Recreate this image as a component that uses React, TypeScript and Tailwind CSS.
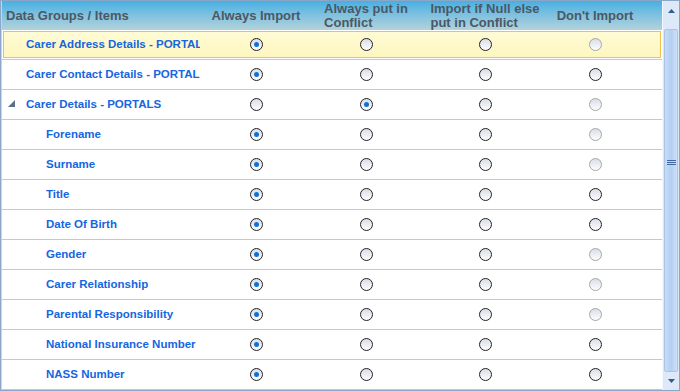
const rows = [
  { label: "Carer Address Details - PORTAL", level: 0, checked: 0, dim: true, highlight: true },
  { label: "Carer Contact Details - PORTAL", level: 0, checked: 0, dim: false },
  { label: "Carer Details - PORTALS", level: 0, checked: 1, dim: true, expander: true },
  { label: "Forename", level: 1, checked: 0, dim: true },
  { label: "Surname", level: 1, checked: 0, dim: true },
  { label: "Title", level: 1, checked: 0, dim: false },
  { label: "Date Of Birth", level: 1, checked: 0, dim: false },
  { label: "Gender", level: 1, checked: 0, dim: true },
  { label: "Carer Relationship", level: 1, checked: 0, dim: true },
  { label: "Parental Responsibility", level: 1, checked: 0, dim: true },
  { label: "National Insurance Number", level: 1, checked: 0, dim: false },
  { label: "NASS Number", level: 1, checked: 0, dim: false },
];

const grid = "grid grid-cols-[198px_112px_108px_130px_90px_1fr] items-center";

function Radio({ checked, dim }: { checked?: boolean; dim?: boolean }) {
  return (
    <span
      className={`w-[13px] h-[13px] rounded-full border flex items-center justify-center bg-gradient-to-b from-[#d9dee6] to-[#fdfdfe] ${
        dim ? "border-[#a6a6a6]" : "border-[#222]"
      }`}
    >
      {checked && <span className="w-[5px] h-[5px] rounded-full bg-[#1170d8]" />}
    </span>
  );
}

function Row({ row }: { row: (typeof rows)[number] }) {
  const cells = [0, 1, 2, 3];
  return (
    <div
      className={`h-[30px] border-b border-[#b1cdee] ${grid} ${
        row.highlight
          ? "bg-gradient-to-b from-[#fffbd6] to-[#fdf6be] shadow-[inset_0_0_0_1px_#ffffff,inset_0_0_0_2px_#f1c24a]"
          : ""
      }`}
    >
      <div
        className={`relative overflow-hidden whitespace-nowrap text-[11.5px] font-bold text-[#1566e0] ${
          row.level === 0 ? "pl-[24px]" : "pl-[44px]"
        }`}
      >
        {row.expander && (
          <svg className="absolute left-[6px] top-[4px]" width="7" height="7" viewBox="0 0 7 7">
            <polygon points="7,0 7,7 0,7" fill="#5a6f88" />
          </svg>
        )}
        {row.label}
      </div>
      {cells.map((c) => (
        <div key={c} className="flex justify-center">
          <Radio checked={row.checked === c} dim={c === 3 && row.dim} />
        </div>
      ))}
      <div />
    </div>
  );
}

export default function App() {
  return (
    <div className="w-[680px] h-[391px] border border-[#8ba6c9] flex bg-white overflow-hidden font-['Liberation_Sans',Arial,sans-serif]">
      <div className="flex-1 flex flex-col border-l border-[#c4d6ee]">
        <div className={`h-[29px] bg-gradient-to-b from-[#43b0e2] to-[#b2d2da] ${grid} text-[13px] font-bold leading-[14px] text-[#4a5865]`}>
          <div className="pl-[4px] whitespace-nowrap">Data Groups / Items</div>
          <div className="text-center whitespace-nowrap">Always Import</div>
          <div className="flex justify-center">
            <span className="text-left whitespace-nowrap">
              Always put in
              <br />
              Conflict
            </span>
          </div>
          <div className="flex justify-center">
            <span className="text-left whitespace-nowrap">
              Import if Null else
              <br />
              put in Conflict
            </span>
          </div>
          <div className="text-center whitespace-nowrap">Don't Import</div>
          <div />
        </div>
        {rows.map((r) => (
          <Row key={r.label} row={r} />
        ))}
      </div>
      <div className="w-[17px] flex flex-col border-l border-[#f4f8fd] bg-[#dde9f8]">
        <div className="h-[28px] flex justify-center pt-[8px]">
          <svg width="7" height="4" viewBox="0 0 7 4">
            <polygon points="3.5,0 7,4 0,4" fill="#2f5d90" />
          </svg>
        </div>
        <div className="flex-1 mx-px rounded-[2px] border border-[#a9c4e6] bg-gradient-to-r from-[#c9dcf6] via-[#b3cff2] to-[#cfe0f7] flex flex-col items-center">
          <div className="mt-[130px] flex flex-col gap-px">
            <span className="block w-[9px] h-px bg-[#3f69a0]" />
            <span className="block w-[9px] h-px bg-[#3f69a0]" />
            <span className="block w-[9px] h-px bg-[#3f69a0]" />
          </div>
        </div>
        <div className="h-[18px] flex justify-center items-center">
          <svg width="7" height="4" viewBox="0 0 7 4">
            <polygon points="0,0 7,0 3.5,4" fill="#2f5d90" />
          </svg>
        </div>
      </div>
    </div>
  );
}
